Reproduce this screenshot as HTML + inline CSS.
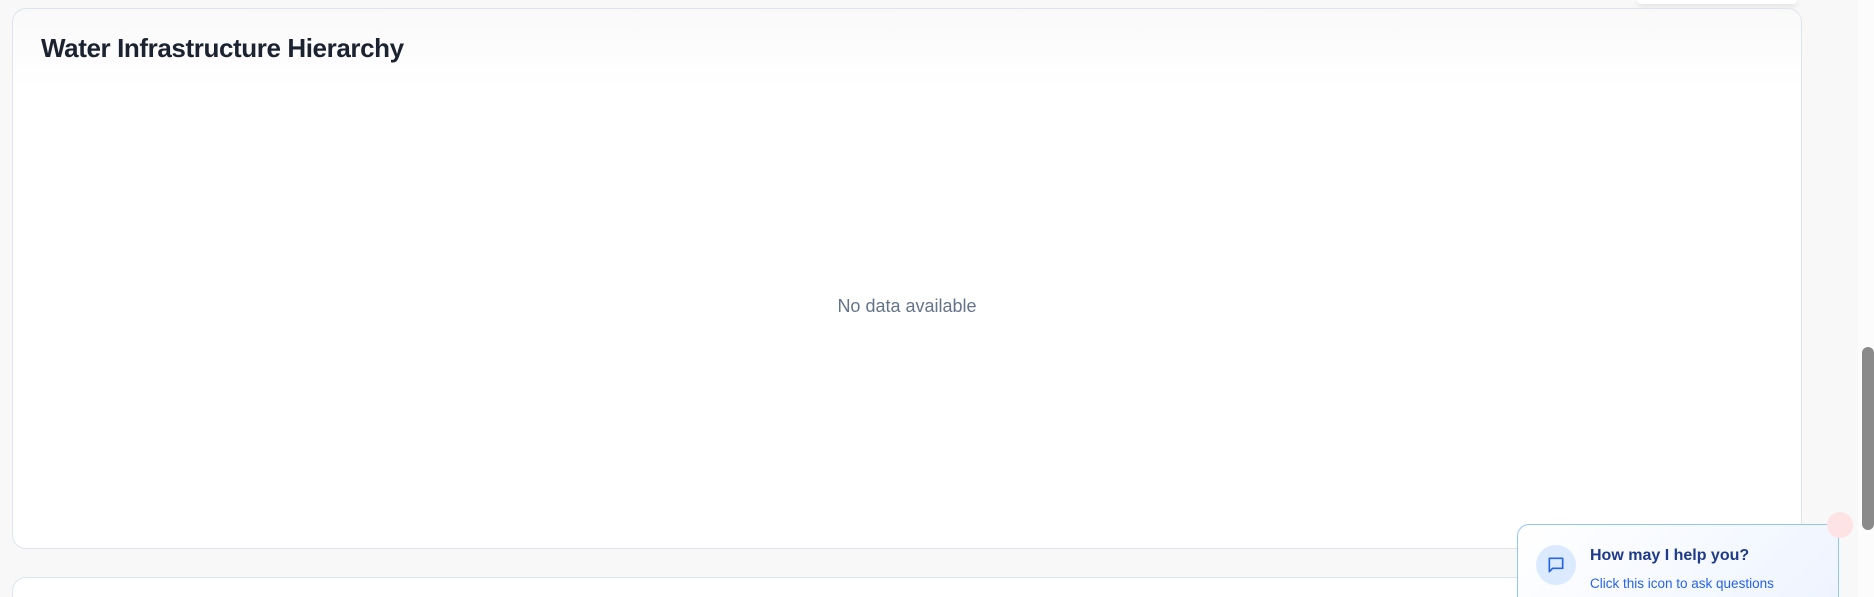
<!DOCTYPE html>
<html><head><style>
html,body{margin:0;padding:0;overflow:hidden;width:1874px;height:597px}
body{background:#f8f8f9;font-family:"Liberation Sans",sans-serif;position:relative}
.wrap{position:absolute;left:0;top:0;width:1874px;height:597px;overflow:hidden}
.card{position:absolute;left:12px;top:8px;width:1790px;height:541px;box-sizing:border-box;border:1px solid #dfe4ec;border-radius:14px;background:linear-gradient(#f9f9fa,#fff 80px)}
.card h1{position:absolute;left:28px;top:24px;margin:0;font-size:26px;font-weight:bold;color:#1b2230;letter-spacing:-0.4px}
.nd{position:absolute;left:0;right:0;top:287px;text-align:center;font-size:18px;color:#64748b}
.card2{position:absolute;left:12px;top:577px;width:1790px;height:20px;box-sizing:border-box;border:1px solid #dfe4ec;border-bottom:none;border-radius:14px 14px 0 0;background:#fff}
.top{position:absolute;left:1637px;top:0;width:160px;height:4px;background:#fff;border-radius:0 0 8px 8px;box-shadow:0 2px 6px rgba(0,0,0,.12)}
.track{position:absolute;left:1858px;top:0;width:16px;height:597px;background:#fcfcfc}
.thumb{position:absolute;left:1862px;top:347px;width:12px;height:183px;background:#8a8a8a;border-radius:6px}
.red{position:absolute;left:1827px;top:512px;width:26px;height:26px;border-radius:50%;background:#fde3e3}
.chat{position:absolute;left:1517px;top:524px;width:322px;height:73px;box-sizing:border-box;border:1px solid #93c5fd;border-bottom:none;border-radius:12px 12px 0 0;background:linear-gradient(135deg,#fff,#eef4ff)}
.ic{position:absolute;left:18px;top:20px;width:40px;height:40px;border-radius:50%;background:#dbeafe}
.ic svg{position:absolute;left:10px;top:10px}
.t1{position:absolute;left:72px;top:22px;font-size:16px;font-weight:bold;color:#1e3a8a}
.t2{position:absolute;left:72px;top:51px;font-size:13.5px;color:#2563eb}
</style></head><body><div class="wrap">
<div class="top"></div>
<div class="card"><h1>Water Infrastructure Hierarchy</h1><div class="nd">No data available</div></div>
<div class="card2"></div>
<div class="track"></div>
<div class="thumb"></div>
<div class="chat"><div class="ic"><svg width="20" height="20" viewBox="0 0 24 24" fill="none" stroke="#2563eb" stroke-width="2" stroke-linejoin="round"><path d="M4 4h16v12H8l-4 4z"/></svg></div>
<div class="t1">How may I help you?</div><div class="t2">Click this icon to ask questions</div></div>
<div class="red"></div>
</div></body></html>
